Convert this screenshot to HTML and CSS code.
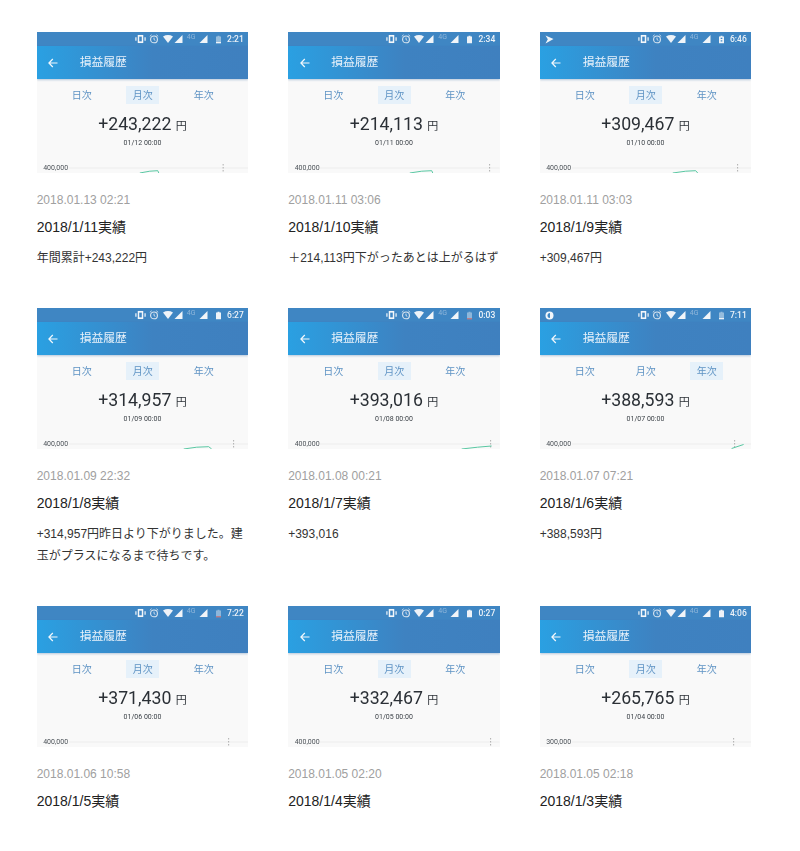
FILE: index.html
```html
<!DOCTYPE html>
<html lang="ja">
<head>
<meta charset="utf-8">
<title>損益履歴</title>
<link rel="stylesheet" href="styles.css">
</head>
<body>
<svg class="defs" width="0" height="0" aria-hidden="true">
  <symbol id="vib" viewBox="0 0 12 10"><path d="M3 .6h6v8.800H3z" fill="currentColor"/><path d="M1 3v4M11 3v4" stroke="currentColor" stroke-width="1.300"/><path d="M4.600 2.400h2.800v5.200H4.600z" fill="#3f87c4"/></symbol>
  <symbol id="alarm" viewBox="0 0 10 10"><circle cx="5" cy="5.400" r="3.400" fill="none" stroke="currentColor" stroke-width="1.100"/><path d="M5 3.600v2l1.300.8M.8 2.400 2.600.8M9.200 2.400 7.400.8" fill="none" stroke="currentColor" stroke-width=".9"/></symbol>
  <symbol id="wifi" viewBox="0 0 10 8"><path d="M0 1.400Q5-1.400 10 1.400L5 8z" fill="currentColor"/></symbol>
  <symbol id="signal" viewBox="0 0 8 8"><path d="M8 0v8H0z" fill="currentColor"/></symbol>
  <symbol id="batt" viewBox="0 0 6 9"><path d="M1.800 0h2.400v1H6v8H0V1h1.800z" fill="currentColor"/></symbol>
  <symbol id="battlow" viewBox="0 0 6 9"><path d="M1.800 0h2.400v1H6v8H0V1h1.800z" fill="currentColor" opacity=".5"/><path d="M0 7.500h6V9H0z" fill="currentColor"/></symbol>
  <symbol id="battred" viewBox="0 0 6 9"><path d="M1.800 0h2.400v1H6v8H0V1h1.800z" fill="currentColor" opacity=".45"/><path d="M0 8h6v1H0z" fill="#d9534f"/></symbol>
  <symbol id="battchg" viewBox="0 0 6 9"><path d="M1.800 0h2.400v1H6v8H0V1h1.800z" fill="currentColor"/><path d="M2 2.500h2V4H2zM2 5.500h2V7H2z" fill="#3f87c4"/></symbol>
  <symbol id="play" viewBox="0 0 9 9"><path d="M.5 .5 8.500 4 .5 8.500 2.800 4.300z" fill="currentColor"/></symbol>
  <symbol id="moon" viewBox="0 0 9 9"><circle cx="4.500" cy="4.500" r="4" fill="currentColor"/><path d="M5 2a2.500 2.500 0 0 0 0 5z" fill="#3f87c4"/></symbol>
  <symbol id="back" viewBox="0 0 10 10"><path d="M9.500 5H1M4.800 1 .9 5l3.900 4" fill="none" stroke="currentColor" stroke-width="1.200"/></symbol>
</svg>

<main class="grid">

<article class="entry">
  <div class="shot">
    <div class="status">
      <span class="notif"></span>
      <svg class="i-vib"><use href="#vib"/></svg><svg class="i-alarm"><use href="#alarm"/></svg><svg class="i-wifi"><use href="#wifi"/></svg><svg class="i-sig"><use href="#signal"/></svg><span class="lte">4G</span><svg class="i-sig"><use href="#signal"/></svg><svg class="i-batt"><use href="#battlow"/></svg><span class="clock">2:21</span>
    </div>
    <div class="appbar"><svg class="i-back"><use href="#back"/></svg><span class="apptitle">損益履歴</span></div>
    <div class="tabs"><span class="tab">日次</span><span class="tab on">月次</span><span class="tab">年次</span></div>
    <div class="amount">+243,222 <small>円</small></div>
    <div class="when">01/12 00:00</div>
    <div class="chart"><span class="axis">400,000</span><svg class="plot" viewBox="0 0 212 11"><path class="grid-l" d="M32 6H212"/><path class="mark" d="M186.500 2V11"/><path class="line" d="M103 11 L113 9.200 L121 8.700 L122 11"/></svg></div>
  </div>
  <p class="date">2018.01.13 02:21</p>
  <h2 class="title">2018/1/11実績</h2>
  <p class="desc">年間累計+243,222円</p>
</article>

<article class="entry">
  <div class="shot">
    <div class="status">
      <span class="notif"></span>
      <svg class="i-vib"><use href="#vib"/></svg><svg class="i-alarm"><use href="#alarm"/></svg><svg class="i-wifi"><use href="#wifi"/></svg><svg class="i-sig"><use href="#signal"/></svg><span class="lte">4G</span><svg class="i-sig"><use href="#signal"/></svg><svg class="i-batt"><use href="#batt"/></svg><span class="clock">2:34</span>
    </div>
    <div class="appbar"><svg class="i-back"><use href="#back"/></svg><span class="apptitle">損益履歴</span></div>
    <div class="tabs"><span class="tab">日次</span><span class="tab on">月次</span><span class="tab">年次</span></div>
    <div class="amount">+214,113 <small>円</small></div>
    <div class="when">01/11 00:00</div>
    <div class="chart"><span class="axis">400,000</span><svg class="plot" viewBox="0 0 212 11"><path class="grid-l" d="M32 6H212"/><path class="mark" d="M202 2V11"/><path class="line" d="M122 11 L134 9.200 L144 8.700 L145 11"/></svg></div>
  </div>
  <p class="date">2018.01.11 03:06</p>
  <h2 class="title">2018/1/10実績</h2>
  <p class="desc">＋214,113円下がったあとは上がるはず</p>
</article>

<article class="entry">
  <div class="shot">
    <div class="status">
      <svg class="notif i-notif"><use href="#play"/></svg>
      <svg class="i-vib"><use href="#vib"/></svg><svg class="i-alarm"><use href="#alarm"/></svg><svg class="i-wifi"><use href="#wifi"/></svg><svg class="i-sig"><use href="#signal"/></svg><span class="lte">4G</span><svg class="i-sig"><use href="#signal"/></svg><svg class="i-batt"><use href="#battchg"/></svg><span class="clock">6:46</span>
    </div>
    <div class="appbar"><svg class="i-back"><use href="#back"/></svg><span class="apptitle">損益履歴</span></div>
    <div class="tabs"><span class="tab">日次</span><span class="tab on">月次</span><span class="tab">年次</span></div>
    <div class="amount">+309,467 <small>円</small></div>
    <div class="when">01/10 00:00</div>
    <div class="chart"><span class="axis">400,000</span><svg class="plot" viewBox="0 0 212 11"><path class="grid-l" d="M32 6H212"/><path class="mark" d="M198 2V11"/><path class="line" d="M133 11 L146 9.200 L156 8.700 L158 11"/></svg></div>
  </div>
  <p class="date">2018.01.11 03:03</p>
  <h2 class="title">2018/1/9実績</h2>
  <p class="desc">+309,467円</p>
</article>

<article class="entry">
  <div class="shot">
    <div class="status">
      <span class="notif"></span>
      <svg class="i-vib"><use href="#vib"/></svg><svg class="i-alarm"><use href="#alarm"/></svg><svg class="i-wifi"><use href="#wifi"/></svg><svg class="i-sig"><use href="#signal"/></svg><span class="lte">4G</span><svg class="i-sig"><use href="#signal"/></svg><svg class="i-batt"><use href="#batt"/></svg><span class="clock">6:27</span>
    </div>
    <div class="appbar"><svg class="i-back"><use href="#back"/></svg><span class="apptitle">損益履歴</span></div>
    <div class="tabs"><span class="tab">日次</span><span class="tab on">月次</span><span class="tab">年次</span></div>
    <div class="amount">+314,957 <small>円</small></div>
    <div class="when">01/09 00:00</div>
    <div class="chart"><span class="axis">400,000</span><svg class="plot" viewBox="0 0 212 11"><path class="grid-l" d="M32 6H212"/><path class="mark" d="M197 2V11"/><path class="line" d="M147 11 L160 9.200 L172 8.700 L175 11"/></svg></div>
  </div>
  <p class="date">2018.01.09 22:32</p>
  <h2 class="title">2018/1/8実績</h2>
  <p class="desc">+314,957円昨日より下がりました。建玉がプラスになるまで待ちです。</p>
</article>

<article class="entry">
  <div class="shot">
    <div class="status">
      <span class="notif"></span>
      <svg class="i-vib"><use href="#vib"/></svg><svg class="i-alarm"><use href="#alarm"/></svg><svg class="i-wifi"><use href="#wifi"/></svg><svg class="i-sig"><use href="#signal"/></svg><span class="lte">4G</span><svg class="i-sig"><use href="#signal"/></svg><svg class="i-batt"><use href="#battred"/></svg><span class="clock">0:03</span>
    </div>
    <div class="appbar"><svg class="i-back"><use href="#back"/></svg><span class="apptitle">損益履歴</span></div>
    <div class="tabs"><span class="tab">日次</span><span class="tab on">月次</span><span class="tab">年次</span></div>
    <div class="amount">+393,016 <small>円</small></div>
    <div class="when">01/08 00:00</div>
    <div class="chart"><span class="axis">400,000</span><svg class="plot" viewBox="0 0 212 11"><path class="grid-l" d="M32 6H212"/><path class="mark" d="M203 2V11"/><path class="line" d="M174 11 L190 9.200 L204 8"/></svg></div>
  </div>
  <p class="date">2018.01.08 00:21</p>
  <h2 class="title">2018/1/7実績</h2>
  <p class="desc">+393,016</p>
</article>

<article class="entry">
  <div class="shot">
    <div class="status">
      <svg class="notif i-notif"><use href="#moon"/></svg>
      <svg class="i-vib"><use href="#vib"/></svg><svg class="i-alarm"><use href="#alarm"/></svg><svg class="i-wifi"><use href="#wifi"/></svg><svg class="i-sig"><use href="#signal"/></svg><span class="lte">4G</span><svg class="i-sig"><use href="#signal"/></svg><svg class="i-batt"><use href="#battlow"/></svg><span class="clock">7:11</span>
    </div>
    <div class="appbar"><svg class="i-back"><use href="#back"/></svg><span class="apptitle">損益履歴</span></div>
    <div class="tabs"><span class="tab">日次</span><span class="tab">月次</span><span class="tab on">年次</span></div>
    <div class="amount">+388,593 <small>円</small></div>
    <div class="when">01/07 00:00</div>
    <div class="chart"><span class="axis">400,000</span><svg class="plot" viewBox="0 0 212 11"><path class="grid-l" d="M32 6H212"/><path class="mark" d="M195 2V11"/><path class="line" d="M192 10.500 L204 6.500"/></svg></div>
  </div>
  <p class="date">2018.01.07 07:21</p>
  <h2 class="title">2018/1/6実績</h2>
  <p class="desc">+388,593円</p>
</article>

<article class="entry">
  <div class="shot">
    <div class="status">
      <span class="notif"></span>
      <svg class="i-vib"><use href="#vib"/></svg><svg class="i-alarm"><use href="#alarm"/></svg><svg class="i-wifi"><use href="#wifi"/></svg><svg class="i-sig"><use href="#signal"/></svg><span class="lte">4G</span><svg class="i-sig"><use href="#signal"/></svg><svg class="i-batt"><use href="#battred"/></svg><span class="clock">7:22</span>
    </div>
    <div class="appbar"><svg class="i-back"><use href="#back"/></svg><span class="apptitle">損益履歴</span></div>
    <div class="tabs"><span class="tab">日次</span><span class="tab on">月次</span><span class="tab">年次</span></div>
    <div class="amount">+371,430 <small>円</small></div>
    <div class="when">01/06 00:00</div>
    <div class="chart"><span class="axis">400,000</span><svg class="plot" viewBox="0 0 212 11"><path class="grid-l" d="M32 6H212"/><path class="mark" d="M192 2V11"/></svg></div>
  </div>
  <p class="date">2018.01.06 10:58</p>
  <h2 class="title">2018/1/5実績</h2>
</article>

<article class="entry">
  <div class="shot">
    <div class="status">
      <span class="notif"></span>
      <svg class="i-vib"><use href="#vib"/></svg><svg class="i-alarm"><use href="#alarm"/></svg><svg class="i-wifi"><use href="#wifi"/></svg><svg class="i-sig"><use href="#signal"/></svg><span class="lte">4G</span><svg class="i-sig"><use href="#signal"/></svg><svg class="i-batt"><use href="#batt"/></svg><span class="clock">0:27</span>
    </div>
    <div class="appbar"><svg class="i-back"><use href="#back"/></svg><span class="apptitle">損益履歴</span></div>
    <div class="tabs"><span class="tab">日次</span><span class="tab on">月次</span><span class="tab">年次</span></div>
    <div class="amount">+332,467 <small>円</small></div>
    <div class="when">01/05 00:00</div>
    <div class="chart"><span class="axis">400,000</span><svg class="plot" viewBox="0 0 212 11"><path class="grid-l" d="M32 6H212"/><path class="mark" d="M203 2V11"/></svg></div>
  </div>
  <p class="date">2018.01.05 02:20</p>
  <h2 class="title">2018/1/4実績</h2>
</article>

<article class="entry">
  <div class="shot">
    <div class="status">
      <span class="notif"></span>
      <svg class="i-vib"><use href="#vib"/></svg><svg class="i-alarm"><use href="#alarm"/></svg><svg class="i-wifi"><use href="#wifi"/></svg><svg class="i-sig"><use href="#signal"/></svg><span class="lte">4G</span><svg class="i-sig"><use href="#signal"/></svg><svg class="i-batt"><use href="#batt"/></svg><span class="clock">4:06</span>
    </div>
    <div class="appbar"><svg class="i-back"><use href="#back"/></svg><span class="apptitle">損益履歴</span></div>
    <div class="tabs"><span class="tab">日次</span><span class="tab on">月次</span><span class="tab">年次</span></div>
    <div class="amount">+265,765 <small>円</small></div>
    <div class="when">01/04 00:00</div>
    <div class="chart"><span class="axis">300,000</span><svg class="plot" viewBox="0 0 212 11"><path class="grid-l" d="M32 6H212"/><path class="mark" d="M194 2V11"/></svg></div>
  </div>
  <p class="date">2018.01.05 02:18</p>
  <h2 class="title">2018/1/3実績</h2>
</article>

</main>
</body>
</html>
```

FILE: styles.css
```css
* { box-sizing: border-box; }
html, body { margin: 0; background: #fff; }
body { font-family: "Liberation Sans", "Noto Sans CJK JP", sans-serif; }
.defs { position: absolute; }

.grid {
  display: grid;
  grid-template-columns: repeat(3, 211.6px);
  column-gap: 39.9px;
  row-gap: 39px;
  padding: 32px 0 0 36.7px;
  align-items: start;
}

.shot {
  height: 141px;
  overflow: hidden;
  background: #f9f9f9;
  display: flex;
  flex-direction: column;
  filter: blur(.35px);
}

.status {
  height: 14px;
  flex: none;
  display: flex;
  align-items: center;
  padding: 0 4.500px 0 5.500px;
  background: #3f86c3;
  color: #fff;
}
.notif { width: 9px; height: 9px; margin-right: auto; }
.i-notif { color: #f2f6fa; }
.i-vib { width: 11px; height: 10px; margin-right: 3.500px; color: #f4f7fa; }
.i-alarm { width: 10px; height: 10px; margin-right: 3.500px; color: #dfe8f1; }
.i-wifi { width: 10px; height: 8px; margin-right: 1px; color: #eef3f8; }
.i-sig { width: 9px; height: 8px; color: #f1f5f9; }
.lte { font: 7px/1 Roboto, sans-serif; color: #8fb6da; margin: -3px 3px 0 4px; width: 9px; }
.i-batt { width: 5px; height: 9px; margin: 0 6px 0 8px; color: #eef3f8; }
.clock { font: 500 8.500px/1 Roboto, sans-serif; color: #eef3f8; width: 17px; text-align: right; }

.appbar {
  height: 33px;
  flex: none;
  display: flex;
  align-items: center;
  padding-left: 11.500px;
  background: linear-gradient(90deg, #2aa0e2, #3e82c1 55%, #3f80bf);
  box-shadow: 0 1px 2px rgba(60, 110, 160, .35);
  color: #fff;
}
.i-back { width: 10px; height: 10px; color: #f3f8fc; }
.apptitle { margin-left: 21.500px; font-size: 11.800px; line-height: 1; color: #e9f2fa; }

.tabs {
  display: grid;
  grid-template-columns: repeat(3, 61px);
  padding: 7px 0 0 14.500px;
  justify-items: center;
  height: 25px;
}
.tab {
  width: 33px;
  height: 18px;
  font-size: 10px;
  line-height: 19px;
  text-align: center;
  color: #5e93c4;
}
.tab.on { background: #e6f1fa; }

.amount {
  height: 22px;
  flex: none;
  margin-top: 9px;
  text-align: center;
  font: 17.700px/22px Roboto, "Noto Sans CJK JP", sans-serif;
  color: #2b3036;
}
.amount small { font-size: 11px; line-height: 1; }

.when {
  height: 10px;
  flex: none;
  margin-top: 3px;
  text-align: center;
  font: 7px/10px Roboto, sans-serif;
  color: #3c4248;
}

.chart {
  position: relative;
  flex: none;
  margin-top: 14px;
  height: 11px;
}
.axis {
  position: absolute;
  left: 6.500px;
  top: 2px;
  font: 7px/9px Roboto, sans-serif;
  color: #4c5258;
}
.plot { position: absolute; inset: 0; width: 100%; height: 100%; }
.grid-l { stroke: #e8e8e8; stroke-width: .7; fill: none; }
.mark { stroke: #9a9a9a; stroke-width: .8; stroke-dasharray: 1.500 1.500; fill: none; }
.line { stroke: #58c7a2; stroke-width: 1; fill: none; }

.date {
  margin: 19px 0 0;
  font-size: 12px;
  line-height: 16px;
  color: #a0a0a0;
}
.title {
  margin: 9px 0 0;
  font-size: 14px;
  font-weight: 400;
  line-height: 20px;
  color: #222;
}
.desc {
  margin: 10px 0 0;
  font-size: 12px;
  line-height: 22px;
  color: #333;
}
```
